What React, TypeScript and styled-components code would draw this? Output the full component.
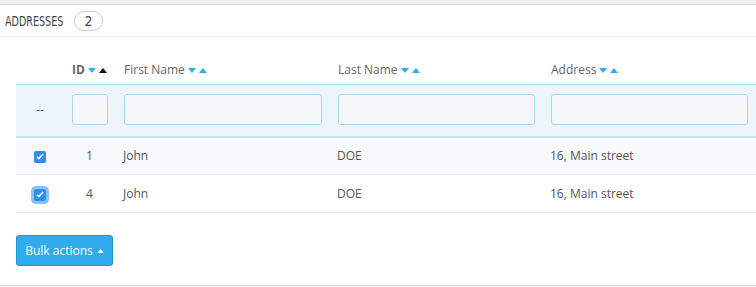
import React from "react";
import styled, { createGlobalStyle } from "styled-components";

const Global = createGlobalStyle`
  html, body { margin: 0; padding: 0; background: #eff1f2; }
  body { font-family: "Open Sans", "Liberation Sans", sans-serif; color: #555; }
  * { box-sizing: border-box; }
`;

const Panel = styled.div`
  margin-top: 4px;
  background: #fff;
  border-top: 1px solid #d3d8db;
  border-bottom: 1px solid #d3d8db;
  height: 282px;
  display: flex;
  flex-direction: column;
`;

const Heading = styled.div`
  height: 32px;
  border-bottom: 1px solid #eee;
  display: flex;
  align-items: center;
  gap: 9px;
  padding: 0 0 0 5px;
`;

const Title = styled.span`
  font-family: "DejaVu Sans Condensed", "Liberation Sans Narrow", "DejaVu Sans", sans-serif;
  font-stretch: condensed;
  font-size: 14px;
  color: #444;
  text-transform: uppercase;
  width: 60px;
  white-space: nowrap;
  display: inline-block;
  transform: scaleX(0.76);
  transform-origin: left center;
`;

const Badge = styled.span`
  display: inline-flex;
  align-items: center;
  justify-content: center;
  width: 29px;
  height: 20px;
  border: 1px solid #ccc;
  border-radius: 10px;
  font-family: "DejaVu Sans Condensed", "DejaVu Sans", sans-serif;
  font-size: 14px;
  color: #444;
`;

const Body = styled.div`
  padding: 19px 0 0 16px;
`;

const Table = styled.table`
  border-collapse: collapse;
  table-layout: fixed;
  width: 740px;
  font-size: 12px;
`;

const HeadCell = styled.th<{ $w: number }>`
  width: ${(p) => p.$w}px;
  text-align: left;
  font-weight: ${(p) => (p.$w === 52 ? 700 : 400)};
  color: #666;
  padding: 0 8px;
  height: 28px;
  vertical-align: middle;
  white-space: nowrap;
`;

const Sorter = styled.span`
  display: inline-flex;
  gap: 3px;
  margin-left: 3px;
  vertical-align: 1px;
`;

const Arrow = styled.svg`
  display: block;
`;

const FilterRow = styled.tr`
  background: #edf4fa;
  border-top: 1px solid #b8ddf2;
  border-bottom: 2px solid #c7e3f4;
`;

const FilterCell = styled.td`
  padding: 9px 8px 11px;
  height: 52px;
  text-align: center;
  color: #555;
`;

const FilterInput = styled.div`
  height: 31px;
  border: 1px solid #a9d7f1;
  border-radius: 3px;
  background: #f4f7f9;
`;

const Row = styled.tr<{ $alt?: boolean }>`
  background: ${(p) => (p.$alt ? "#fff" : "#f8fafc")};
  border-bottom: 1px solid #e8e8e8;
`;

const Cell = styled.td<{ $center?: boolean }>`
  height: 38px;
  padding: 0 8px 0 7px;
  text-align: ${(p) => (p.$center ? "center" : "left")};
  color: #555;
  vertical-align: middle;
`;

const Check = styled.span<{ $focus?: boolean }>`
  display: inline-flex;
  align-items: center;
  justify-content: center;
  width: 12px;
  height: 12px;
  border-radius: 2px;
  background: #2e8ef0;
  margin-left: 1px;
  box-shadow: ${(p) => (p.$focus ? "0 0 0 3px rgba(46,142,240,0.55)" : "none")};
`;

const Footer = styled.div`
  padding: 22px 0 0 16px;
`;

const BulkButton = styled.button`
  font-family: "Open Sans", "Liberation Sans", sans-serif;
  font-size: 12px;
  color: #fff;
  background: #2eacee;
  border: 1px solid #1f94cf;
  border-radius: 3px;
  height: 31px;
  width: 97px;
  padding: 0;
  display: inline-flex;
  align-items: center;
  justify-content: center;
  gap: 4px;
`;

const Down = ({ c }: { c: string }) => (
  <Arrow width="8" height="5" viewBox="0 0 8 5">
    <path d="M0 0 H8 L4 5 Z" fill={c} />
  </Arrow>
);
const Up = ({ c, w = 8, h = 5 }: { c: string; w?: number; h?: number }) => (
  <Arrow width={w} height={h} viewBox="0 0 8 5">
    <path d="M0 5 H8 L4 0 Z" fill={c} />
  </Arrow>
);

const BLUE = "#2eacee";

const cols = [
  { w: 48, label: "" },
  { w: 52, label: "ID" },
  { w: 214, label: "First Name" },
  { w: 213, label: "Last Name" },
  { w: 213, label: "Address" },
];

const rows = [
  { id: 1, first: "John", last: "DOE", addr: "16, Main street" },
  { id: 4, first: "John", last: "DOE", addr: "16, Main street" },
];

export default function App() {
  return (
    <>
      <Global />
      <Panel>
        <Heading>
          <Title>Addresses</Title>
          <Badge>2</Badge>
        </Heading>
        <Body>
          <Table>
            <thead>
              <tr>
                {cols.map((c, i) => (
                  <HeadCell key={i} $w={c.w}>
                    {c.label}
                    {c.label && (
                      <Sorter>
                        <Down c={BLUE} />
                        <Up c={i === 1 ? "#111" : BLUE} />
                      </Sorter>
                    )}
                  </HeadCell>
                ))}
              </tr>
            </thead>
            <tbody>
              <FilterRow>
                <FilterCell>--</FilterCell>
                <FilterCell>
                  <FilterInput />
                </FilterCell>
                <FilterCell>
                  <FilterInput />
                </FilterCell>
                <FilterCell>
                  <FilterInput />
                </FilterCell>
                <FilterCell>
                  <FilterInput />
                </FilterCell>
              </FilterRow>
              {rows.map((r, i) => (
                <Row key={r.id} $alt={i === 1}>
                  <Cell $center>
                    <Check $focus={i === 1}>
                      <svg width="8" height="7" viewBox="0 0 8 7">
                        <path d="M1 3.8 L3 5.6 L7 1" stroke="#fff" strokeWidth="1.6" fill="none" />
                      </svg>
                    </Check>
                  </Cell>
                  <Cell $center>{r.id}</Cell>
                  <Cell>{r.first}</Cell>
                  <Cell>{r.last}</Cell>
                  <Cell>{r.addr}</Cell>
                </Row>
              ))}
            </tbody>
          </Table>
        </Body>
        <Footer>
          <BulkButton>
            Bulk actions
            <Up c="#fff" w={7} h={4} />
          </BulkButton>
        </Footer>
      </Panel>
    </>
  );
}
